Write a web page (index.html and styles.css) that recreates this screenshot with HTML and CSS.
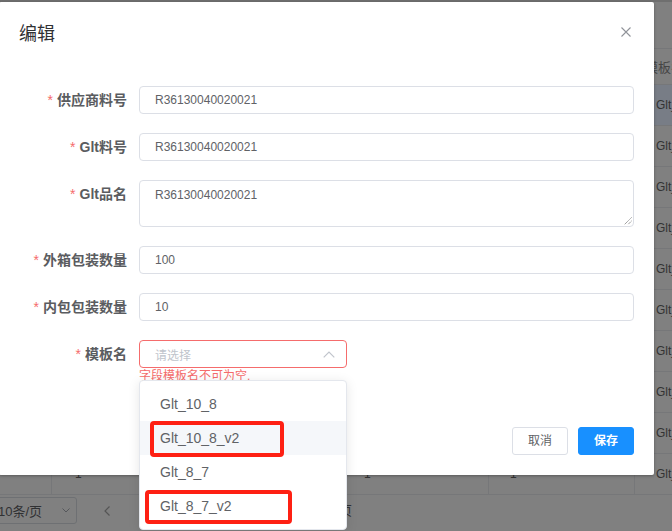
FILE: index.html
```html
<!DOCTYPE html>
<html lang="zh">
<head>
<meta charset="utf-8">
<title>编辑</title>
<link rel="stylesheet" href="styles.css">
</head>
<body>
<div class="page">
  <div class="topbar"></div>
  <div class="toolbar"></div>
  <div class="table">
    <div class="tr thead">
      <div class="td c1"></div><div class="td c2"></div><div class="td c3"></div><div class="td c4"></div><div class="td c5 th5">模板名</div>
    </div>
    <div class="tr hover"><div class="td c1"></div><div class="td c2"></div><div class="td c3"></div><div class="td c4"></div><div class="td c5">Glt_10_8</div></div>
    <div class="tr"><div class="td c1"></div><div class="td c2"></div><div class="td c3"></div><div class="td c4"></div><div class="td c5">Glt_10_8_v2</div></div>
    <div class="tr"><div class="td c1"></div><div class="td c2"></div><div class="td c3"></div><div class="td c4"></div><div class="td c5">Glt_8_7</div></div>
    <div class="tr"><div class="td c1"></div><div class="td c2"></div><div class="td c3"></div><div class="td c4"></div><div class="td c5">Glt_8_7_v2</div></div>
    <div class="tr"><div class="td c1"></div><div class="td c2"></div><div class="td c3"></div><div class="td c4"></div><div class="td c5">Glt_10_8</div></div>
    <div class="tr"><div class="td c1"></div><div class="td c2"></div><div class="td c3"></div><div class="td c4"></div><div class="td c5">Glt_10_8_v2</div></div>
    <div class="tr"><div class="td c1"></div><div class="td c2"></div><div class="td c3"></div><div class="td c4"></div><div class="td c5">Glt_8_7</div></div>
    <div class="tr"><div class="td c1"></div><div class="td c2"></div><div class="td c3"></div><div class="td c4"></div><div class="td c5">Glt_8_7_v2</div></div>
    <div class="tr"><div class="td c1"></div><div class="td c2"></div><div class="td c3"></div><div class="td c4"></div><div class="td c5">Glt_10_8</div></div>
    <div class="tr"><div class="td c1"></div><div class="td c2">1</div><div class="td c3">1</div><div class="td c4">1</div><div class="td c5">Glt_8_7</div></div>
  </div>
  <div class="pager">
    <div class="sizes"><span>10条/页</span><svg width="8" height="5" viewBox="0 0 8 5"><path d="M0.5 0.5L4 4L7.5 0.5" fill="none" stroke="#55575b" stroke-width="1"/></svg></div>
    <div class="prev"><svg width="6" height="10" viewBox="0 0 6 10"><path d="M5.5 0.5L1 5L5.5 9.5" fill="none" stroke="#555" stroke-width="1.2"/></svg></div>
    <div class="goto">页</div>
  </div>
</div>

<div class="dialog">
  <div class="dlg-header">
    <span class="dlg-title">编辑</span>
    <svg class="dlg-close" width="10" height="10" viewBox="0 0 10 10"><path d="M0.5 0.5L9.5 9.5M9.5 0.5L0.5 9.5" stroke="#909399" stroke-width="1.1"/></svg>
  </div>
  <div class="dlg-body">
    <div class="row"><div class="label"><span class="req">*</span>供应商料号</div><div class="control"><div class="input">R36130040020021</div></div></div>
    <div class="row"><div class="label"><span class="req">*</span>Glt料号</div><div class="control"><div class="input">R36130040020021</div></div></div>
    <div class="row"><div class="label"><span class="req">*</span>Glt品名</div><div class="control"><div class="textarea">R36130040020021<svg class="grip" width="8" height="8" viewBox="0 0 8 8"><path d="M7.5 0.5L0.5 7.5M7.5 4L4 7.5" stroke="#7a7a7a" stroke-width="1" stroke-dasharray="1 0.6"/></svg></div></div></div>
    <div class="row"><div class="label"><span class="req">*</span>外箱包装数量</div><div class="control"><div class="input">100</div></div></div>
    <div class="row"><div class="label"><span class="req">*</span>内包包装数量</div><div class="control"><div class="input">10</div></div></div>
    <div class="row row-err"><div class="label"><span class="req">*</span>模板名</div>
      <div class="control">
        <div class="select"><span class="placeholder">请选择</span><svg width="12" height="7" viewBox="0 0 12 7"><path d="M0.7 6.3L6 1L11.3 6.3" fill="none" stroke="#c0c4cc" stroke-width="1.2"/></svg></div>
        <div class="err">字段模板名不可为空.</div>
      </div>
    </div>
  </div>
  <div class="dlg-footer">
    <button class="btn">取消</button>
    <button class="btn btn-primary">保存</button>
  </div>
</div>

<ul class="dropdown">
  <li class="opt">Glt_10_8</li>
  <li class="opt opt-hover">Glt_10_8_v2</li>
  <li class="opt">Glt_8_7</li>
  <li class="opt">Glt_8_7_v2</li>
</ul>

<div class="mark mark1"></div>
<div class="mark mark2"></div>
</body>
</html>
```

FILE: styles.css
```css
* { box-sizing: border-box; }
html, body { margin: 0; padding: 0; }
body {
  width: 672px;
  height: 531px;
  overflow: hidden;
  position: relative;
  background: #808080;
  font-family: "Liberation Sans", "Noto Sans CJK SC", sans-serif;
}

/* background page (dimmed) */
.topbar { height: 2px; background: #6f6f6f; }
.toolbar { height: 46px; }
.table { border-top: 1px solid #767779; }
.tr {
  display: flex;
  height: 41px;
  border-bottom: 1px solid #767779;
  font-size: 12px;
  color: #333;
}
.thead { height: 36px; }
.hover { background: #787d86; }
.td {
  display: flex;
  align-items: center;
  padding-left: 21px;
  border-right: 1px solid #767779;
  white-space: nowrap;
  overflow: hidden;
}
.c1 { width: 52px; padding-left: 0; }
.c2 { width: 291px; padding-left: 23px; }
.c3 { width: 146px; }
.c4 { width: 146px; }
.c5 { flex: 1; border-right: 0; }
.th5 { padding-left: 10px; font-size: 13px; color: #454545; }

.pager {
  height: 36px;
  padding-top: 2px;
  display: flex;
  align-items: flex-start;
  font-size: 13px;
  color: #303133;
}
.sizes {
  margin-left: -18px;
  width: 95px;
  height: 27px;
  border: 1px solid #6e7073;
  border-radius: 3px;
  display: flex;
  align-items: center;
  justify-content: space-between;
  padding: 0 6px 0 15px;
}
.prev { margin-left: 27px; height: 27px; display: flex; align-items: center; }
.goto { margin-left: 229px; height: 27px; line-height: 27px; }

/* dialog */
.dialog {
  position: absolute;
  left: -1px;
  top: 2px;
  width: 655px;
  background: #fff;
  border-radius: 2px;
  box-shadow: 0 1px 3px rgba(0, 0, 0, 0.3);
}
.dlg-header {
  display: flex;
  justify-content: space-between;
  align-items: center;
  padding: 20px 23px 10px 20px;
}
.dlg-title { font-size: 18px; line-height: 24px; color: #303133; }
.dlg-close { margin-bottom: 4px; }
.dlg-body { padding: 30px 20px; }
.row { display: flex; margin-bottom: 19px; }
.row-err { margin-bottom: 5px; }
.label {
  width: 120px;
  padding-right: 12px;
  text-align: right;
  font-size: 14px;
  font-weight: bold;
  line-height: 28px;
  color: #5a5c60;
  white-space: nowrap;
}
.req { color: #f56c6c; margin-right: 4px; font-weight: normal; }
.control { flex: 1; }
.input, .textarea, .select {
  border: 1px solid #dcdfe6;
  border-radius: 4px;
  font-size: 12px;
  color: #606266;
  padding: 0 15px;
}
.input { height: 28px; line-height: 26px; }
.textarea {
  position: relative;
  height: 47px;
  padding: 5px 15px;
  line-height: 18px;
}
.grip { position: absolute; right: 1px; bottom: 1px; }
.select {
  width: 208px;
  height: 28px;
  border-color: #f56c6c;
  display: flex;
  align-items: center;
  justify-content: space-between;
  padding: 0 11px 0 15px;
}
.placeholder { color: #c0c4cc; }
.err {
  padding-top: 2px;
  font-size: 12px;
  line-height: 12px;
  color: #f56c6c;
}
.dlg-footer {
  display: flex;
  justify-content: flex-end;
  gap: 10px;
  padding: 10px 20px 20px;
}
.btn {
  height: 28px;
  width: 56px;
  padding: 0;
  border: 1px solid #dcdfe6;
  border-radius: 3px;
  background: #fff;
  color: #606266;
  font-family: inherit;
  font-size: 12px;
  line-height: 26px;
}
.btn-primary {
  background: #1890ff;
  border-color: #1890ff;
  color: #fff;
  font-weight: bold;
}

/* select dropdown */
.dropdown {
  position: absolute;
  left: 139px;
  top: 380px;
  width: 208px;
  margin: 0;
  padding: 6px 0;
  list-style: none;
  background: #fff;
  border: 1px solid #e4e7ed;
  border-radius: 4px;
  box-shadow: 0 2px 12px rgba(0, 0, 0, 0.1);
}
.opt {
  height: 34px;
  line-height: 34px;
  padding: 0 20px;
  font-size: 14px;
  color: #606266;
}
.opt-hover { background: #f5f7fa; }

/* red annotation boxes */
.mark {
  position: absolute;
  border: 4px solid #fe2013;
  border-radius: 4px;
}
.mark1 { left: 150px; top: 421px; width: 134px; height: 36px; }
.mark2 { left: 145px; top: 490px; width: 147px; height: 34px; }
```
